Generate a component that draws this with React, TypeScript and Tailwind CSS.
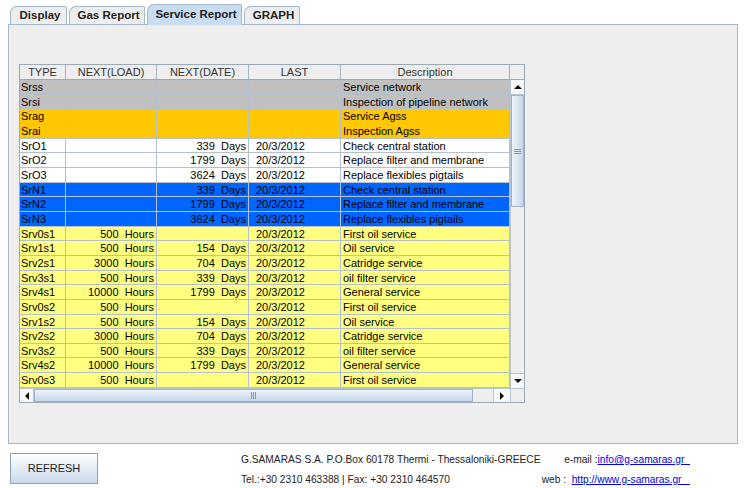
import React from "react";

type Row = { t: string; l: string; d: string; last: string; desc: string; bg: string };

const G = "bg-[#c0c0c0]";
const O = "bg-[#ffc800]";
const W = "bg-white";
const B = "bg-[#0066ff]";
const Y = "bg-[#ffff80]";

const srv = (n: string, bg: string): Row[] => [
  { t: `Srv0s${n}`, l: "500  Hours", d: "", last: "20/3/2012", desc: "First oil service", bg },
  { t: `Srv1s${n}`, l: "500  Hours", d: "154  Days", last: "20/3/2012", desc: "Oil service", bg },
  { t: `Srv2s${n}`, l: "3000  Hours", d: "704  Days", last: "20/3/2012", desc: "Catridge service", bg },
  { t: `Srv3s${n}`, l: "500  Hours", d: "339  Days", last: "20/3/2012", desc: "oil filter service", bg },
  { t: `Srv4s${n}`, l: "10000  Hours", d: "1799  Days", last: "20/3/2012", desc: "General service", bg },
];

const rows: Row[] = [
  { t: "Srss", l: "", d: "", last: "", desc: "Service network", bg: G },
  { t: "Srsi", l: "", d: "", last: "", desc: "Inspection of pipeline network", bg: G },
  { t: "Srag", l: "", d: "", last: "", desc: "Service Agss", bg: O },
  { t: "Srai", l: "", d: "", last: "", desc: "Inspection Agss", bg: O },
  { t: "SrO1", l: "", d: "339  Days", last: "20/3/2012", desc: "Check central station", bg: W },
  { t: "SrO2", l: "", d: "1799  Days", last: "20/3/2012", desc: "Replace filter and membrane", bg: W },
  { t: "SrO3", l: "", d: "3624  Days", last: "20/3/2012", desc: "Replace flexibles pigtails", bg: W },
  { t: "SrN1", l: "", d: "339  Days", last: "20/3/2012", desc: "Check central station", bg: B },
  { t: "SrN2", l: "", d: "1799  Days", last: "20/3/2012", desc: "Replace filter and membrane", bg: B },
  { t: "SrN3", l: "", d: "3624  Days", last: "20/3/2012", desc: "Replace flexibles pigtails", bg: B },
  ...srv("1", Y),
  ...srv("2", Y),
  { t: "Srv0s3", l: "500  Hours", d: "", last: "20/3/2012", desc: "First oil service", bg: Y },
];

function Tab({ label, w, selected }: { label: string; w: string; selected?: boolean }) {
  return (
    <div
      className={
        `relative mr-[2px] flex ${w} items-center justify-center rounded-tl-[7px] rounded-tr-[2px] border border-b-0 border-[#a3b8cc] pl-[3px] text-[11.5px] font-bold text-[#222] ` +
        (selected ? "z-10 -mb-px h-[21px] bg-[#c8ddf2]" : "h-[18px] bg-[#eeeeee]")
      }
    >
      {label}
    </div>
  );
}

function Tri({ dir }: { dir: "up" | "down" | "left" | "right" }) {
  const pts =
    dir === "up"
      ? "0,4 4,0 8,4"
      : dir === "down"
      ? "0,0 8,0 4,4"
      : dir === "left"
      ? "4,0 4,8 0,4"
      : "0,0 0,8 4,4";
  const w = dir === "up" || dir === "down" ? 8 : 4;
  const h = dir === "up" || dir === "down" ? 4 : 8;
  return (
    <svg width={w} height={h} viewBox={`0 0 ${w} ${h}`}>
      <polygon points={pts} fill="#111" />
    </svg>
  );
}

export default function App() {
  const cell = "h-full border-r border-[#b4c0cc] overflow-hidden whitespace-pre leading-[14px]";
  return (
    <div className="h-[488px] w-[745px] overflow-hidden bg-white font-['Liberation_Sans',Arial,sans-serif] text-black">
      {/* tabs */}
      <div className="flex h-[24px] items-end pl-[10px]">
        <Tab label="Display" w="w-[57px]" />
        <Tab label="Gas Report" w="w-[76px]" />
        <Tab label="Service Report" w="w-[95px]" selected />
        <Tab label="GRAPH" w="w-[56px]" />
      </div>
      {/* panel */}
      <div className="ml-[8px] h-[420px] w-[730px] border border-[#a3b8cc] bg-[#eeeeee] pl-[10px] pt-[39px]">
        <div className="w-[506px] border border-[#9aaab9] bg-[#eeeeee] text-[11px]">
          {/* header */}
          <div className="flex h-[15px] border-b border-[#9aaab9] bg-[#eeeeee] text-[#333]">
            {[
              ["TYPE", "w-[46px]"],
              ["NEXT(LOAD)", "w-[91px]"],
              ["NEXT(DATE)", "w-[92px]"],
              ["LAST", "w-[92px]"],
              ["Description", "w-[169px]"],
            ].map(([h, w]) => (
              <div key={h} className={`${w} flex items-center justify-center border-r border-[#a8b4c0] leading-[14px]`}>
                {h}
              </div>
            ))}
            <div className="flex-1" />
          </div>
          {/* body */}
          <div className="flex h-[308px]">
            <div className="w-[490px] overflow-hidden">
              {rows.map((r) => (
                <div key={r.t} className={`flex h-[14.67px] border-b border-[#b4c0cc] ${r.bg}`}>
                  <div className={`${cell} w-[46px] pl-[1px]`}>{r.t}</div>
                  <div className={`${cell} w-[91px] pr-[2px] text-right`}>{r.l}</div>
                  <div className={`${cell} w-[92px] pr-[2px] text-right`}>{r.d}</div>
                  <div className={`${cell} w-[92px] pl-[7px]`}>{r.last}</div>
                  <div className={`${cell} w-[169px] pl-[2px]`}>{r.desc}</div>
                </div>
              ))}
            </div>
            {/* vertical scrollbar */}
            <div className="flex w-[14px] flex-col border-l border-[#b8c6d4] bg-[#eeeeee]">
              <div className="flex h-[15px] items-center justify-center border-b border-[#b8c6d4] bg-[#f8f8f8]">
                <Tri dir="up" />
              </div>
              <div className="flex h-[112px] items-center justify-center border border-[#9fb2c6] bg-gradient-to-r from-[#eef4fb] via-[#d9e6f4] to-[#c4d6ea]">
                <div className="flex flex-col gap-[1px]">
                  <div className="h-px w-[7px] bg-[#7f97b2]" />
                  <div className="h-px w-[7px] bg-[#7f97b2]" />
                  <div className="h-px w-[7px] bg-[#7f97b2]" />
                </div>
              </div>
              <div className="flex-1" />
              <div className="flex h-[15px] items-center justify-center border-t border-[#b8c6d4] bg-[#f8f8f8]">
                <Tri dir="down" />
              </div>
            </div>
          </div>
          {/* horizontal scrollbar */}
          <div className="flex h-[14px] border-t border-[#b8c6d4]">
            <div className="flex w-[490px]">
              <div className="flex w-[14px] items-center justify-center border-r border-[#b8c6d4] bg-[#f8f8f8]">
                <Tri dir="left" />
              </div>
              <div className="flex w-[439px] items-center justify-center border border-[#9fb2c6] bg-gradient-to-b from-[#eef4fb] via-[#d9e6f4] to-[#c4d6ea]">
                <div className="flex gap-[1px]">
                  <div className="h-[7px] w-px bg-[#7f97b2]" />
                  <div className="h-[7px] w-px bg-[#7f97b2]" />
                  <div className="h-[7px] w-px bg-[#7f97b2]" />
                </div>
              </div>
              <div className="flex-1 bg-[#eeeeee]" />
              <div className="flex w-[17px] items-center justify-center border-l border-[#b8c6d4] bg-[#f8f8f8]">
                <Tri dir="right" />
              </div>
            </div>
            <div className="flex-1 border-l border-[#b8c6d4] bg-[#eeeeee]" />
          </div>
        </div>
      </div>
      {/* footer */}
      <div className="flex pt-[9px]">
        <div className="ml-[10px] flex h-[31px] w-[88px] shrink-0 items-center justify-center border border-[#8da2ba] bg-gradient-to-b from-white to-[#c9d9ea] text-[11px] text-[#222]">
          REFRESH
        </div>
        <div className="ml-[143px] flex shrink-0 flex-col gap-[7px] whitespace-nowrap text-[10.2px] leading-[13px] text-[#222]">
          <div>G.SAMARAS S.A. P.O.Box 60178 Thermi - Thessaloniki-GREECE</div>
          <div>Tel.:+30 2310 463388 | Fax: +30 2310 464570</div>
        </div>
        <div className="ml-auto mr-[55px] flex shrink-0 flex-col items-end gap-[7px] whitespace-nowrap text-[10.2px] leading-[13px] text-[#222]">
          <div className="whitespace-pre">
            e-mail :<span className="text-[#0000ee] underline">info@g-samaras.gr  </span>
          </div>
          <div className="whitespace-pre">
            web :  <span className="text-[#0000ee] underline">http://www.g-samaras.gr   </span>
          </div>
        </div>
      </div>
    </div>
  );
}
